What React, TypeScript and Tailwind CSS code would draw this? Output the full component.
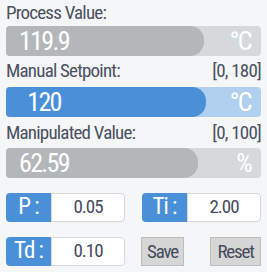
import React from "react";

const font = { fontFamily: '"Roboto Condensed", Roboto, sans-serif' };

function Bar({ value, unit, fill, track, fillTo }: { value: string; unit: string; fill: string; track: string; fillTo: number }) {
  return (
    <div className={`relative h-[30px] rounded-[4px] overflow-hidden ${track}`}>
      <div className={`absolute left-0 top-0 bottom-0 rounded-r-[14px] ${fill}`} style={{ width: fillTo }} />
      <div className="relative flex h-full items-center justify-between text-white text-[26px] tracking-[-1.6px] leading-none">
        <span className="w-[76px] text-center">{value}</span>
        <span className="pr-[10px]">{unit}</span>
      </div>
    </div>
  );
}

function Param({ label, value }: { label: string; value: string }) {
  return (
    <div className="flex h-[29px] w-[119px]">
      <div className="w-[45px] rounded-l-[4px] bg-[#4a90d9] text-white text-[23px] tracking-[-1px] flex items-center justify-center">{label}</div>
      <div className="flex-1 rounded-r-[4px] border border-[#d5d8dc] bg-white text-[#454b5c] text-[19px] tracking-[-1px] flex items-center justify-center">{value}</div>
    </div>
  );
}

export default function App() {
  return (
    <div className="w-[267px] h-[272px] bg-[#f5f6f8] px-[6px] pt-[2px] text-[#4a5160]" style={font}>
      <div className="text-[19px] tracking-[-0.8px] leading-[22px]">Process Value:</div>
      <div className="mt-[2px]">
        <Bar value="119.9" unit="°C" fill="bg-[#b3b7ba]" track="bg-[#d6d9dc]" fillTo={198} />
      </div>
      <div className="mt-[4px] flex justify-between text-[19px] tracking-[-0.8px] leading-[22px]">
        <span>Manual Setpoint:</span>
        <span>[0, 180]</span>
      </div>
      <div className="mt-[5px]">
        <Bar value="120" unit="°C" fill="bg-[#4a90d9]" track="bg-[#b1cfee]" fillTo={200} />
      </div>
      <div className="mt-[5px] flex justify-between text-[19px] tracking-[-0.8px] leading-[22px]">
        <span>Manipulated Value:</span>
        <span>[0, 100]</span>
      </div>
      <div className="mt-[4px]">
        <Bar value="62.59" unit="%" fill="bg-[#b3b7ba]" track="bg-[#d6d9dc]" fillTo={192} />
      </div>
      <div className="mt-[15px] flex justify-between">
        <Param label="P :" value="0.05" />
        <Param label="Ti :" value="2.00" />
      </div>
      <div className="mt-[15px] flex">
        <Param label="Td :" value="0.10" />
        <button className="ml-[16px] h-[29px] w-[43px] border border-[#bdbdbd] bg-[#d6d6d6] text-[19px] tracking-[-1.2px] text-[#454b5c]">Save</button>
        <button className="ml-auto h-[29px] w-[51px] border border-[#bdbdbd] bg-[#d6d6d6] text-[19px] tracking-[-1.2px] text-[#454b5c]">Reset</button>
      </div>
    </div>
  );
}
